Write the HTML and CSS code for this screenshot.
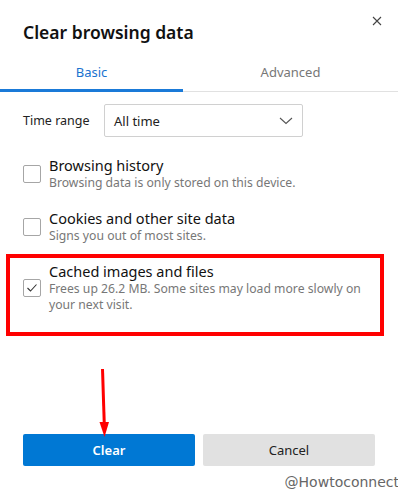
FILE: index.html
```html
<!DOCTYPE html>
<html lang="en">
<head>
    <meta charset="UTF-8">
    <title>Clear browsing data</title>
    <link rel="stylesheet" href="styles.css">
</head>
<body>

<div class="dialog">
    <!-- Header -->
    <div class="dialog-header">
        <h1>Clear browsing data</h1>
        <button class="close-btn" aria-label="Close">
            <svg width="10" height="10" viewBox="0 0 10 10">
                <path d="M1 1 L9 9 M9 1 L1 9" stroke="#444" stroke-width="1.1" fill="none"/>
            </svg>
        </button>
    </div>

    <!-- Tabs -->
    <div class="tabs">
        <div class="tab active">Basic</div>
        <div class="tab">Advanced</div>
    </div>

    <div class="dialog-body">
        <div class="time-range">
            <span class="label">Time range</span>
            <div class="select">
                <span>All time</span>
                <svg width="14" height="8" viewBox="0 0 14 8">
                    <path d="M1 1 L7 6.5 L13 1" stroke="#555" stroke-width="1.1" fill="none"/>
                </svg>
            </div>
        </div>

        <div class="option">
            <span class="checkbox"></span>
            <div class="option-text">
                <div class="option-title">Browsing history</div>
                <div class="option-desc">Browsing data is only stored on this device.</div>
            </div>
        </div>

        <div class="option">
            <span class="checkbox"></span>
            <div class="option-text">
                <div class="option-title">Cookies and other site data</div>
                <div class="option-desc">Signs you out of most sites.</div>
            </div>
        </div>

        <div class="option highlighted">
            <span class="checkbox checked">
                <svg width="12" height="10" viewBox="0 0 12 10">
                    <path d="M1.5 5 L4.5 8 L10.5 1.5" stroke="#333" stroke-width="1.1" fill="none"/>
                </svg>
            </span>
            <div class="option-text">
                <div class="option-title">Cached images and files</div>
                <div class="option-desc">Frees up 26.2 MB. Some sites may load more slowly on your next visit.</div>
            </div>
        </div>
    </div>

    <!-- Buttons -->
    <div class="dialog-footer">
        <button class="btn primary">Clear</button>
        <button class="btn">Cancel</button>
        <!-- red annotation arrow -->
        <svg class="arrow" width="14" height="72" viewBox="0 0 14 72">
            <path d="M5.5 1 L7.3 57" stroke="#f00" stroke-width="3" fill="none"/>
            <path d="M2.5 54 L12 54 L7.5 69 Z" fill="#f00"/>
        </svg>
    </div>

    <div class="watermark">@Howtoconnect</div>
</div>

</body>
</html>
```

FILE: styles.css
```css
body {
    font-family: 'Noto Sans', 'Open Sans', sans-serif;
    background-color: #fff;
    margin: 0;
    padding: 0;
    width: 398px;
    height: 490px;
    overflow: hidden;
    color: #111;
}

.dialog {
    display: flex;
    flex-direction: column;
}

/* Header */
.dialog-header {
    display: flex;
    justify-content: space-between;
    align-items: flex-start;
    padding: 20px 16px 0 23px;
    height: 43px;
}

.dialog-header h1 {
    margin: 0;
    font-size: 17.5px;
    font-weight: 600;
    line-height: 24px;
    color: #111;
}

.close-btn {
    margin-top: -4px;
    padding: 0;
    border: none;
    background: none;
    width: 10px;
    height: 10px;
    display: flex;
}

/* Tabs */
.tabs {
    display: flex;
    border-bottom: 1px solid #e1e1e1;
}

.tab {
    flex-grow: 1;
    text-align: center;
    font-size: 13px;
    line-height: 18px;
    color: #777;
    padding-bottom: 10px;
}

.tab.active {
    flex-grow: 0;
    width: 183px;
    color: #1a73cf;
    padding-bottom: 8px;
    border-bottom: 3px solid #1a7ad8;
    margin-bottom: -1px;
}

/* Body */
.dialog-body {
    padding: 12px 23px 0 23px;
    display: flex;
    flex-direction: column;
}

.time-range {
    display: flex;
    align-items: center;
    gap: 12px;
    margin-bottom: 19px;
}

.label {
    font-size: 12.5px;
    white-space: nowrap;
    width: 69px;
    color: #222;
}

.select {
    width: 179px;
    height: 31px;
    border: 1px solid #d0d0d0;
    border-radius: 2px;
    padding: 0 9px 0 9px;
    display: flex;
    align-items: center;
    justify-content: space-between;
    font-size: 13px;
    color: #222;
}

.option {
    display: flex;
    align-items: center;
    gap: 8px;
    margin-bottom: 18px;
    position: relative;
}

.checkbox {
    width: 16px;
    height: 16px;
    flex-shrink: 0;
    border: 1px solid #a6a6a6;
    border-radius: 2px;
    display: flex;
    align-items: center;
    justify-content: center;
}

.option-title {
    font-size: 14.5px;
    line-height: 19px;
    color: #111;
}

.option-desc {
    font-size: 12.2px;
    line-height: 16px;
    color: #777;
}

/* Red annotation box around the selected option */
.option.highlighted::after {
    content: '';
    position: absolute;
    top: -8px;
    bottom: -23px;
    left: -17px;
    right: -9px;
    border: 4px solid #f00;
}

/* Footer buttons */
.dialog-footer {
    display: flex;
    gap: 8px;
    padding: 0 23px;
    margin-top: 103px;
    position: relative;
}

.btn {
    width: 172px;
    height: 32px;
    border: none;
    border-radius: 2px;
    background-color: #e1e1e1;
    color: #222;
    font-family: inherit;
    font-size: 13px;
}

.btn.primary {
    background-color: #0078d4;
    color: #fff;
    font-weight: 600;
}

.arrow {
    position: absolute;
    left: 97px;
    top: -66px;
}

.watermark {
    font-family: 'DejaVu Sans', sans-serif;
    font-size: 14px;
    color: #666;
    text-align: right;
    margin-top: 8px;
    line-height: 16px;
    margin-right: -1px;
}
```
